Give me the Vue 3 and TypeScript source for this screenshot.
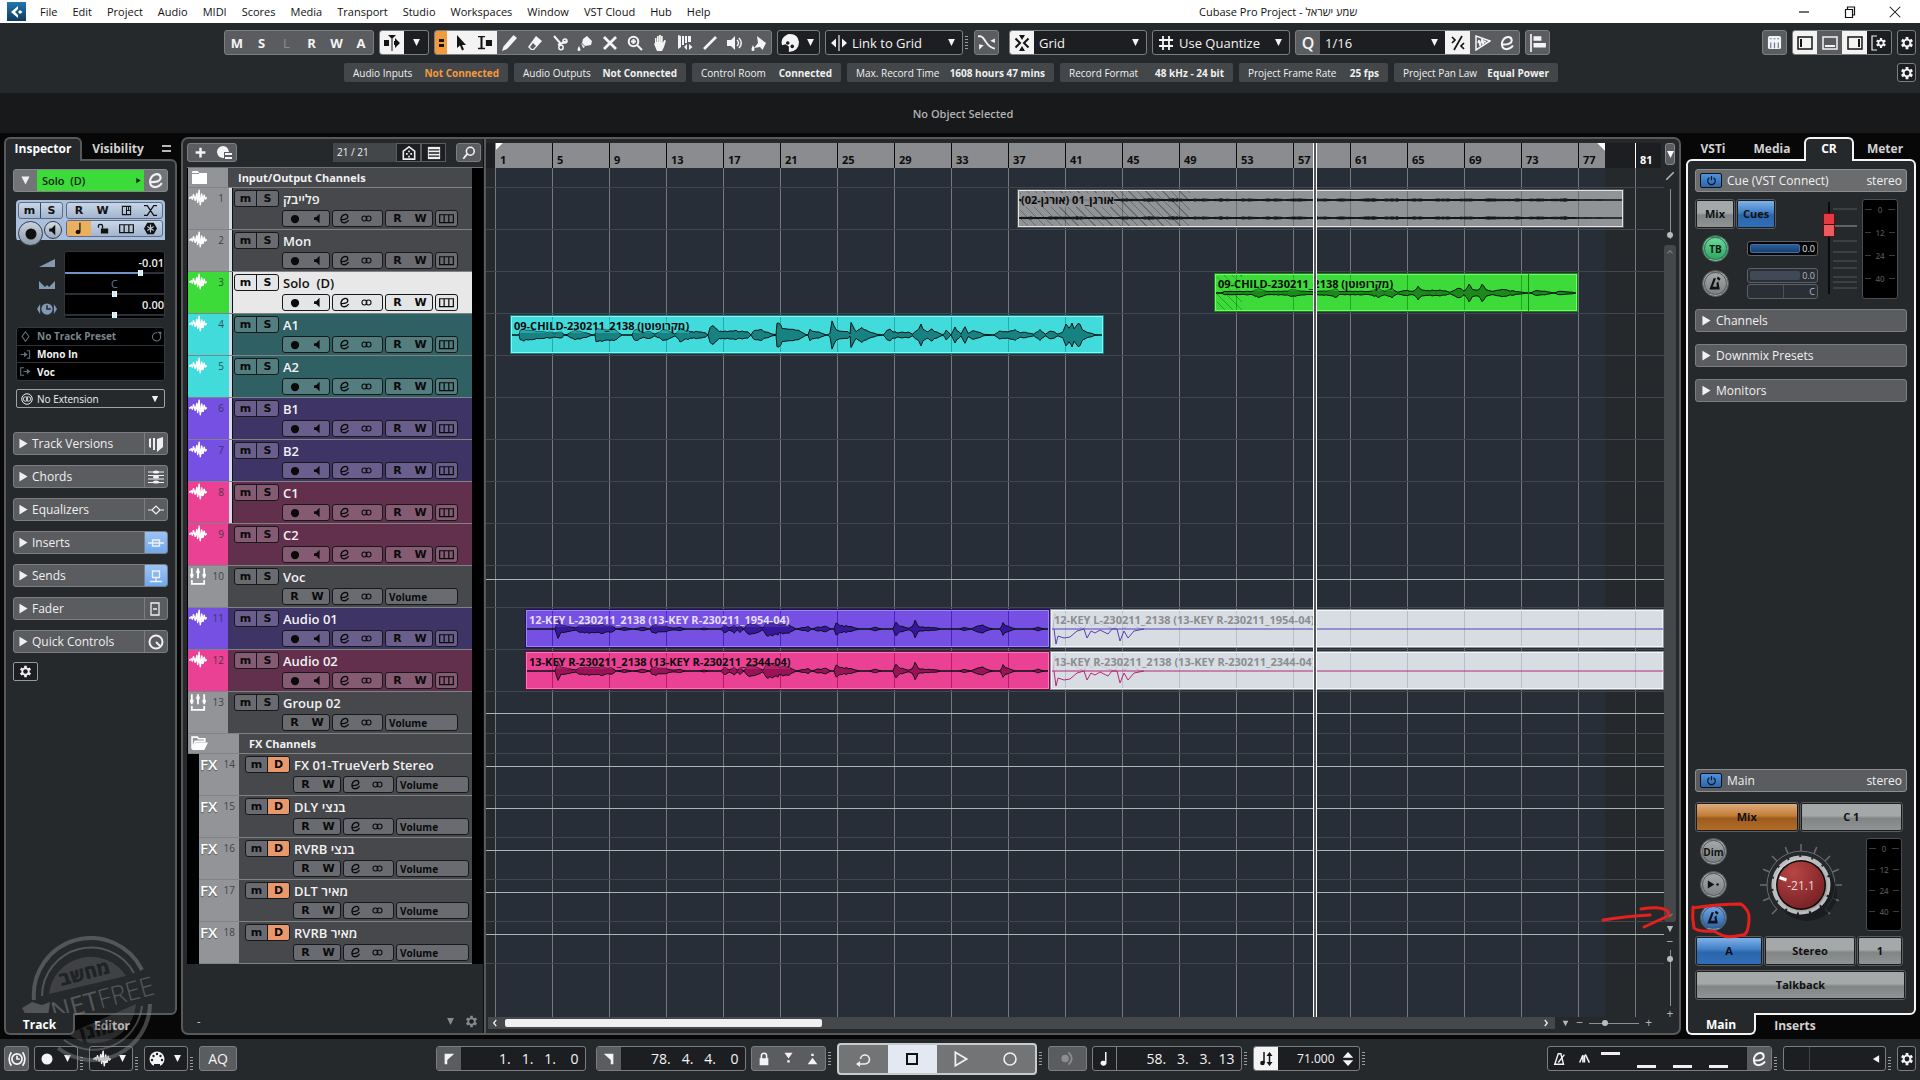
<script setup lang="ts">
import { h, ref } from 'vue'

const icons: Record<string, string> = {
  logo: '<path d="M9 2 2 8 9 14V11L6 8 9 5z"/><path d="M11 6l2.500 2-2.500 2-2-2z"/>',
  down: '<path d="M3 3h10l-5 10z"/>',
  right: '<path d="M3 2v12L13 8z"/>',
  left: '<path d="M13 2v12L3 8z"/>',
  auto: '<path d="M0 5h5v6H0zM10 3v3h1V3l5 5-5 5V10h-1v3zM7.500 0h1v16h-1zM4 0h8L8 4z"/>',
  arrow: '<path d="M5 0v13l3-2.500 2 5 2-1-2-4.500h4z"/>',
  range: '<path d="M0 0h8v1.500H5.200v12H8V15H0v-1.500h2.800v-12H0zM9 4.500h7v7H9z"/>',
  pencil: '<path d="M0 16l1.500-4.500L11.500 0 15 3 5 14z"/>',
  eraser: '<path d="M9 1l6 5-8 9H4L1 12z"/><path d="M3 12l2 2h1l3-3-3-3z" fill="#5b5c60"/>',
  cut: '<path d="M2 1l7 8M15 6L6 10" fill="none" stroke="currentColor" stroke-width="2"/><circle cx="13" cy="6" r="2" fill="none" stroke="currentColor" stroke-width="1.500"/><circle cx="9" cy="12.500" r="2.200" fill="none" stroke="currentColor" stroke-width="1.500"/>',
  glue: '<path d="M10 1l5 5-1 4-6 1-3-3 1-4zM4 8l4 4-2 1zM2 11q3 5 0 5t0-5z"/>',
  mute: '<path d="M2 2l12 12M14 2L2 14" fill="none" stroke="currentColor" stroke-width="2.800"/>',
  zoom: '<circle cx="6.500" cy="6.500" r="4.800" fill="none" stroke="currentColor" stroke-width="2"/><path d="M10 10l5 5M4 6.500h5M6.500 4v5" stroke="currentColor" stroke-width="2"/>',
  hand: '<path d="M3 8V3h1.500v4H5V1h1.700v6H7V0h1.800v7H9V1h1.700v7l1.500-3 1.800.500L12 12l-2 4H5L2 9z"/>',
  comp: '<path d="M1 0l3 1v11l-3 2zM5 1h2v9H5zM8 1h2v7H8zM11 1h3v6h-3z"/><path d="M10 9l-3 3 3 3zM12 9l3.500 3-3.500 3z"/>',
  line: '<path d="M2 14L14 2" stroke="currentColor" stroke-width="2.600"/>',
  play: '<path d="M0 5h4l4-4v14l-4-4H0z"/><path d="M10 5q3 3 0 6M12 3q4.500 5 0 10" fill="none" stroke="currentColor" stroke-width="1.500"/>',
  paint: '<path d="M6 1l9 7-2 4-1.500 3-2.500-3-6 1 4-5zM2 10q3 6 0 6t0-6z"/>',
  palette: '<path d="M8 0a8 7.500 0 0 0-7 10l3-1 3 2v5q9-1 9-9Q15 0 8 0z"/><circle cx="6" cy="8" r="1.600" fill="#1c1e21"/><circle cx="10" cy="11" r="1.600" fill="#1c1e21"/>',
  linkgrid: '<path d="M7.400 0h1.200v16H7.400zM5 3.500v9L0 8zM11 3.500v9l5-4.500z"/>',
  xfade: '<path d="M0 2h2q2 0 5 5t8 6" fill="none" stroke="currentColor" stroke-width="1.700"/><path d="M11 6l4-2v4zM5 10l-4-1v5z"/>',
  snap: '<path d="M5 0h6L8 5zM5 16h6l-3-5z"/><path d="M1.500 3.500L6 8l-4.500 4.500M14.500 3.500L10 8l4.500 4.500" fill="none" stroke="currentColor" stroke-width="2"/>',
  hash: '<path d="M5 1v14M11 1v14M1 5h14M1 11h14" stroke="currentColor" stroke-width="1.800"/>',
  quant: '<path d="M2 2l3 3-3 3M14 8l-3 3 3 3M12 1L4 15" fill="none" stroke="currentColor" stroke-width="1.700"/>',
  wavetri: '<path d="M1 1v14L15 6z" fill="none" stroke="currentColor" stroke-width="1.500"/><path d="M3 8l1-3 1 6 2-7 1 5 1-3 2 1" fill="none" stroke="currentColor" stroke-width="1.500"/>',
  e: '<path d="M2.500 9.500Q12.500 10 12.800 5.500 12.500 1.800 9 2 4.500 2.500 3 7.500 2 14 7.500 14.200 11.500 14 14 10.500" fill="none" stroke="currentColor" stroke-width="2"/>',
  align: '<path d="M1 0h1.500v16H1zM4 2h7v4H4zM4 8h11v4H4z"/>',
  pads: '<rect x="1" y="1" width="14" height="14" rx="2"/><path d="M3 4h2M7 4h2M11 4h2M4 8v6M8 8v6M12 8v6" stroke="#6a7898" stroke-width="1.300"/>',
  pleft: '<rect x="1" y="2" width="14" height="12" fill="none" stroke="currentColor" stroke-width="1.500"/><path d="M3 4h2v8H3z"/>',
  pbottom: '<rect x="1" y="2" width="14" height="12" fill="none" stroke="currentColor" stroke-width="1.500"/><path d="M3 10h10v2H3z"/>',
  pright: '<rect x="1" y="2" width="14" height="12" fill="none" stroke="currentColor" stroke-width="1.500"/><path d="M11 4h2v8h-2z"/>',
  psetup: '<path d="M6 1H1v14h5" fill="none" stroke="currentColor" stroke-width="1.200"/><path d="M10 3v10M5.700 5.500l8.600 5M5.700 10.500l8.600-5" stroke="currentColor" stroke-width="2.200"/><circle cx="10" cy="8" r="3.400"/><circle cx="10" cy="8" r="1.800" fill="#1c1e21"/>',
  gear: '<path d="M8 1v14M2 4.500l12 7M2 11.500l12-7" stroke="currentColor" stroke-width="3.200"/><circle cx="8" cy="8" r="5"/><circle cx="8" cy="8" r="2.800" fill="#1c1e21"/>',
  plus: '<path d="M8 2v12M2 8h12" stroke="currentColor" stroke-width="3"/>',
  addtrack: '<path d="M7 1a6 6 0 1 0 0 12h1V7h5Q12 1 7 1zM9 8h7v2H9zM9 12h7v2H9z"/>',
  house: '<path d="M1.500 15V6L8 1l6.500 5v9z" fill="none" stroke="currentColor" stroke-width="1.800"/><path d="M8 5v2M4.500 9h2M9.500 9h2M8 11v2" stroke="currentColor" stroke-width="1.800"/>',
  list: '<path d="M1 1h14v14H1z"/><path d="M2 4.500h12M2 8h12M2 11.500h12" stroke="#1c1e21" stroke-width="1.500"/>',
  search: '<circle cx="9.500" cy="6" r="4.500" fill="none" stroke="currentColor" stroke-width="1.800"/><path d="M6 9l-4.500 5.500" stroke="currentColor" stroke-width="2"/>',
  folder: '<path d="M1 3q0-1 1-1h5l1 2h8v11H1z"/><path d="M1 4.500h7" stroke="#929497"/>',
  folderOpen: '<path d="M1 13V2h5l1 1.500h6V6H4z" fill="none" stroke="currentColor" stroke-width="1.500"/><path d="M4.500 7H16l-3.500 7H1z"/>',
  wave: '<path d="M0 8h1l1-1 1 2 1-4 1.500 5L7 4l.700 8L9 1l1 13 1.300-9.500L12.500 11l1-5.500 1 3.500.700-1h.800" fill="none" stroke="currentColor" stroke-width="1.300" stroke-linejoin="round"/><path d="M4 6l1.500 3L8.500 4l2 7 1.500-5 1.500 3-1 2-2 1-3-2z"/>',
  group: '<path d="M2.500 1v9M8 1v9M13.500 1v9M2.500 11.500V15h11v-3.500" fill="none" stroke="currentColor" stroke-width="1.600"/><path d="M1 6h3v2.500H1zM6.500 3h3v2.500h-3zM12 6h3v2.500h-3z"/>',
  rec: '<circle cx="8" cy="8" r="5.500"/>',
  speaker: '<path d="M3 6h3l5-5v14l-5-5H3z"/>',
  stereo: '<circle cx="5" cy="8" r="3.600" fill="none" stroke="currentColor" stroke-width="1.500"/><circle cx="11" cy="8" r="3.600" fill="none" stroke="currentColor" stroke-width="1.500"/>',
  lanes: '<path d="M.700 4h14.600v8.500H.700zM5.500 4v8.500M10.500 4v8.500" fill="none" stroke="currentColor" stroke-width="1.300"/>',
  view: '<path d="M2 2h12v12H2zM8 2v12M8 8h6M11 2v6" fill="none" stroke="currentColor" stroke-width="1.500"/>',
  cross: '<path d="M0 2h4l8 12h4M16 2h-4L4 14H0" fill="none" stroke="currentColor" stroke-width="1.500"/>',
  note: '<path d="M9 1h1.500v11a3 2.500 0 1 1-1.500-2z"/>',
  unlock: '<path d="M6 8h9v6H6z"/><path d="M8 8V5q0-2-2.500-2T3 5v2" fill="none" stroke="currentColor" stroke-width="1.600"/>',
  lock: '<path d="M3 7h10v8H3z"/><path d="M5 8V4.500q0-3 3-3t3 3V8" fill="none" stroke="currentColor" stroke-width="1.800"/>',
  freeze: '<path d="M4 1h8l4 7-4 7H4L0 8z"/><path d="M8 3v10M4 5.500l8 5M4 10.500l8-5" stroke="#b3c4dc" stroke-width="1.500"/>',
  volume: '<path d="M0 12L16 4v8z"/>',
  pan: '<path d="M0 4l6 6 2-2 2 2 6-6v8H0z"/>',
  delay: '<circle cx="8" cy="8" r="4.500"/><path d="M2.500 4v8L0 8zM13.500 4v8L16 8z"/><path d="M8 5v3h3" stroke="#25292c" fill="none" stroke-width="1.200"/>',
  preset: '<path d="M8 1l5 7-5 7-5-7z" fill="none" stroke="currentColor" stroke-width="1.500"/>',
  reload: '<path d="M13 5a6 6 0 1 1-4-2.500" fill="none" stroke="currentColor" stroke-width="1.500"/><path d="M9 1h6v5z"/>',
  input: '<path d="M1 8h8M10 2.500h4v11h-4" fill="none" stroke="currentColor" stroke-width="1.500"/><path d="M6 4l5 4-5 4z"/>',
  output: '<path d="M6 2.500H1v11h5M5 8h6" fill="none" stroke="currentColor" stroke-width="1.500"/><path d="M10 4l5 4-5 4z"/>',
  ara: '<circle cx="8" cy="8" r="7" fill="none" stroke="currentColor" stroke-width="1.300"/><circle cx="6" cy="8" r="3" fill="none" stroke="currentColor" stroke-width="1.100"/><circle cx="10" cy="8" r="3" fill="none" stroke="currentColor" stroke-width="1.100"/>',
  versions: '<path d="M1 3l2-1v10l-2-1zM5 2h2v12H5zM9 3l6-2v10l-6 5z"/>',
  chords: '<path d="M0 3h16M0 6.500h16M0 10h16M0 13.500h16" stroke="currentColor" stroke-width="1.200"/><ellipse cx="8" cy="3" rx="3" ry="1.600"/><ellipse cx="8" cy="8" rx="3" ry="1.600"/><ellipse cx="8" cy="13" rx="3" ry="1.600"/>',
  eq: '<path d="M0 8h4l4-4 4 4-4 4-4-4M12 8h4" fill="none" stroke="currentColor" stroke-width="1.200"/>',
  insert: '<path d="M0 8h16M4.500 5h7v6h-7z" fill="none" stroke="currentColor" stroke-width="1.300"/>',
  send: '<path d="M4.500 3h7v6.500h-7zM8 9.500V13M2 13.500h12" fill="none" stroke="currentColor" stroke-width="1.300"/>',
  fader: '<path d="M3 2h8v12H3zM5 8h4" fill="none" stroke="currentColor" stroke-width="1.300"/>',
  knob: '<circle cx="8" cy="8" r="6.500" fill="none" stroke="currentColor" stroke-width="2"/><path d="M8 8l4 4" stroke="currentColor" stroke-width="2"/>',
  power: '<path d="M5 4a5.500 5.500 0 1 0 6 0M8 1.500v6" fill="none" stroke="currentColor" stroke-width="1.700"/>',
  metro: '<path d="M6 2.500h2.500l-3.500 9h4.500L9 7.500l2-2 1.500 9H1.500z"/><path d="M10.500.500l3 2.500-1.500 2-2.500-2z"/>',
  metroSmall: '<path d="M6 2h3l3 12H2z" fill="none" stroke="currentColor" stroke-width="1.600"/><path d="M6 12l7-9" stroke="currentColor" stroke-width="1.600"/>',
  countin: '<path d="M2 13L6 4v9M8 4v9M9 3l5 10" fill="none" stroke="currentColor" stroke-width="1.800"/>',
  ref: '<path d="M1 3v10l8-5z"/><circle cx="13" cy="8" r="1.500"/>',
  clockbr: '<circle cx="8" cy="8" r="4.500" fill="none" stroke="currentColor" stroke-width="1.600"/><path d="M8 5v3h2.500M3 2Q-1 8 3 14M13 2q4 6 0 12" fill="none" stroke="currentColor" stroke-width="1.500"/>',
  midi: '<circle cx="8" cy="8" r="7.500"/><g fill="#1c1e21"><circle cx="3" cy="9" r="1.200"/><circle cx="4.500" cy="5" r="1.200"/><circle cx="8" cy="3" r="1.200"/><circle cx="11.500" cy="5" r="1.200"/><circle cx="13" cy="9" r="1.200"/><path d="M5 13h6v3H5z"/></g>',
  flagL: '<path d="M3 2h11L6 9v5H3z"/>',
  flagR: '<path d="M2 2h11v12h-3V9z"/>',
  punchIn: '<path d="M3 1h10L8 8zM6.500 10h3v3h-3z"/>',
  punchOut: '<path d="M2 15h12L8 7zM6.500 2h3v3h-3z"/>',
  cycle: '<path d="M2 13h8a4.500 4.500 0 1 0-4.500-5" fill="none" stroke="currentColor" stroke-width="1.600"/><path d="M5 10l-4 3 4 3z"/>',
  stop: '<path d="M3 3h10v10H3z" fill="none" stroke="currentColor" stroke-width="2"/>',
  start: '<path d="M3 2v12l10-6z" fill="none" stroke="currentColor" stroke-width="1.600"/>',
  record: '<circle cx="8" cy="8" r="6" fill="none" stroke="currentColor" stroke-width="1.600"/>',
  bounce: '<circle cx="5.500" cy="8" r="4"/><path d="M9 1.500q7 6.500 0 13" fill="none" stroke="currentColor" stroke-width="2"/>',
  tempo: '<path d="M6 1v11" stroke="currentColor" stroke-width="1.500"/><circle cx="4.500" cy="12" r="2.300"/><path d="M11.500 4v9" stroke="currentColor" stroke-width="1.500"/><path d="M11.500 1l3 4h-6zM11.500 15l3-4h-6z"/>',
  spin: '<path d="M8 0l6 6.500H2zM8 16l6-6.500H2z"/>',
  min: '<path d="M3 8h10" stroke="currentColor" stroke-width="1.200"/>',
  restore: '<path d="M3.500 5.500h7v8h-7zM5.500 5V3h7v8H11" fill="none" stroke="currentColor" stroke-width="1.200"/>',
  close: '<path d="M2 2l12 12M14 2L2 14" stroke="currentColor" stroke-width="1.200"/>',
  up: '<path d="M4 10l4-4 4 4" fill="none" stroke="currentColor" stroke-width="2"/>',
  dn: '<path d="M4 6l4 4 4-4" fill="none" stroke="currentColor" stroke-width="2"/>',
  lt: '<path d="M10 3L6 8l4 5" fill="none" stroke="currentColor" stroke-width="2.200"/>',
  gt: '<path d="M6 3l4 5-4 5" fill="none" stroke="currentColor" stroke-width="2.200"/>',
}

const Ico = (p: { n: string; s?: number }) =>
  h('svg', {
    viewBox: '0 0 16 16',
    width: p.s ?? 16,
    height: p.s ?? 16,
    fill: 'currentColor',
    'aria-hidden': 'true',
    innerHTML: icons[p.n],
  })
Ico.props = ['n', 's']

const menus = ['File', 'Edit', 'Project', 'Audio', 'MIDI', 'Scores', 'Media', 'Transport', 'Studio', 'Workspaces', 'Window', 'VST Cloud', 'Hub', 'Help']
const states = ['M', 'S', 'L', 'R', 'W', 'A']
const tools = ['pencil', 'eraser', 'cut', 'glue', 'mute', 'zoom', 'hand', 'comp', 'line', 'play', 'paint']
const status = [
  { label: 'Audio Inputs', value: 'Not Connected', warn: true, w: 164 },
  { label: 'Audio Outputs', value: 'Not Connected', w: 172 },
  { label: 'Control Room', value: 'Connected', w: 149 },
  { label: 'Max. Record Time', value: '1608 hours 47 mins', w: 207 },
  { label: 'Record Format', value: '48 kHz - 24 bit', w: 173 },
  { label: 'Project Frame Rate', value: '25 fps', w: 149 },
  { label: 'Project Pan Law', value: 'Equal Power', w: 164 },
]
const sections = [
  { name: 'Track Versions', icon: 'versions' },
  { name: 'Chords', icon: 'chords' },
  { name: 'Equalizers', icon: 'eq' },
  { name: 'Inserts', icon: 'insert', on: true },
  { name: 'Sends', icon: 'send', on: true },
  { name: 'Fader', icon: 'fader' },
  { name: 'Quick Controls', icon: 'knob' },
]

type Kind = 'audio' | 'group' | 'fx' | 'folder'
interface Clip { x: number; w: number; color: string; name?: string; rtl?: boolean; fades?: number; paths: string[]; split?: number }
interface Track { kind: Kind; name: string; no?: number; tone: string; bar?: boolean; auto?: number; open?: boolean; clips?: Clip[] }

const BAR_ORIGIN = 9
const BAR_STEP = 57

/* Builds a mirrored waveform outline from [position, amplitude] envelope points. */
function wave(env: number[][], mid: number, end: number, rough = 0.35, gain = 1): string {
  const pts: [number, number][] = []
  for (let i = 0; i < env.length - 1; i++) {
    const [x0, a0] = env[i]
    const [x1, a1] = env[i + 1]
    for (let x = x0; x < x1; x += 2) {
      const base = (a0 + ((a1 - a0) * (x - x0)) / (x1 - x0)) * gain
      const n = Math.abs(Math.sin(x * 12.9898) * 43758.5) % 1
      pts.push([x, Math.max(0.1, base * (1 - rough * n))])
    }
  }
  const f = (v: number) => v.toFixed(1)
  const top = pts.map(([x, a]) => `${f(x)} ${f(mid - a)}`)
  const low = [...pts].reverse().map(([x, a]) => `${f(x)} ${f(mid + a)}`)
  return `M2 ${mid}L${top.join('L')}L${end - 2} ${mid}L${low.join('L')}Z`
}
const scale = (env: number[][], k: number) => env.map(([x, a]) => [Math.round(x / k), a])

const childEnv = scale([[22, 0], [25, 7], [52, 6], [67, 5], [100, 3], [127, 3], [133, 0], [143, 1], [155, 5], [172, 5], [197, 1], [209, 0], [211, 8], [257, 7], [275, 0], [299, 0], [305, 7], [327, 3], [337, 5], [355, 1], [367, 4], [379, 7], [405, 1], [417, 7], [432, 5], [477, 3], [486, 0], [491, 9], [494, 11], [502, 8], [512, 4], [545, 5], [582, 4], [590, 0], [599, 5], [617, 6], [642, 1], [653, 0], [655, 16], [660, 15], [667, 8], [687, 7], [707, 5], [722, 1], [731, 0], [735, 6], [757, 3], [777, 0], [784, 2], [790, 15], [798, 6], [827, 4], [832, 1], [835, 14], [839, 12], [847, 4], [862, 8], [877, 4], [899, 1], [915, 0], [927, 7], [947, 3], [977, 3], [987, 1], [995, 6], [1003, 8], [1007, 15], [1013, 6], [1025, 4], [1034, 7], [1047, 3], [1060, 0], [1069, 6], [1080, 0], [1091, 8], [1105, 1], [1115, 10], [1122, 2], [1137, 6], [1160, 1], [1185, 0], [1197, 4], [1220, 4], [1237, 6], [1250, 3], [1265, 3], [1285, 1], [1299, 7], [1310, 1], [1327, 5], [1342, 1], [1354, 4], [1362, 14], [1370, 7], [1376, 15], [1382, 9], [1387, 13], [1397, 11], [1404, 6], [1412, 4], [1424, 2], [1435, 0]], 2.45)
const soloEnv = scale([[16, 0], [25, 2], [45, 2], [60, 2], [90, 2], [102, 5], [120, 2], [150, 2], [170, 3], [186, 4], [205, 2], [230, 2], [270, 3], [278, 6], [288, 2], [310, 2], [335, 2], [360, 2], [380, 5], [395, 2], [410, 5], [425, 1], [440, 3], [460, 2], [470, 7], [485, 3], [530, 3], [545, 1], [565, 6], [577, 2], [582, 4], [587, 13], [594, 4], [608, 3], [618, 11], [627, 4], [640, 2], [665, 4], [710, 1], [722, 0], [728, 0], [745, 3], [765, 2], [785, 0], [795, 2], [825, 1], [835, 0]], 2.306)
const keyEnv = scale([[68, 0], [74, 11], [80, 5], [105, 2], [115, 1], [120, 4], [165, 5], [195, 4], [203, 0], [225, 2], [240, 0], [265, 2], [280, 0], [285, 5], [310, 4], [330, 1], [345, 2], [360, 0], [390, 0], [400, 1], [415, 0], [440, 0], [447, 5], [458, 1], [468, 5], [475, 1], [482, 4], [490, 0], [500, 7], [525, 4], [533, 1], [540, 8], [570, 6], [595, 4], [608, 0], [633, 3], [643, 0], [655, 2], [675, 3], [685, 0], [693, 0], [697, 7], [710, 4], [730, 3], [750, 0], [770, 0], [785, 2], [800, 0], [825, 0], [830, 8], [840, 4], [860, 1], [868, 3], [873, 11], [881, 3], [895, 2], [915, 2], [935, 0], [970, 0], [985, 2], [1000, 0], [1010, 3], [1025, 5], [1035, 2], [1050, 0], [1063, 0], [1070, 7], [1080, 3], [1100, 0], [1135, 0], [1150, 2], [1165, 0]], 2.24)
const organ: number[][] = []
for (let x = 4; x < 590; x += 8) organ.push([x, x > 560 ? 0.2 : 0.3 + 1.1 * Math.abs(Math.sin(x * 1.7))])

const tail = 'M4 18L6 33L8 25L14 27L20 26L27 20L34 18L37 27L41 20L45 22L50 19L58 23L62 18L67 18L70 30L74 20L78 27L84 20L94 18'
const tailTop = 'M3 18L5 3L9 12L16 9L24 13L34 18L38 8L41 15L47 12L56 15L64 18L70 10L75 18L80 9L88 17L94 18'

const tracks: Track[] = [
  { kind: 'folder', name: 'Input/Output Channels', tone: 'gray' },
  { kind: 'audio', no: 1, name: 'פלייבק', tone: 'gray', bar: true, clips: [{ x: 531, w: 607, color: 'c-gray', name: 'אורגן_01 (אורגן-02)', rtl: true, fades: 170, paths: [wave(organ, 11, 607, 0.6), wave(organ, 29, 607, 0.6)] }] },
  { kind: 'audio', no: 2, name: 'Mon', tone: 'gray', bar: true },
  { kind: 'audio', no: 3, name: 'Solo  (D)', tone: 'sel', bar: true, clips: [{ x: 728, w: 364, color: 'c-green', name: '09-CHILD-230211_2138 (מקרופוטן)', fades: 25, split: 313, paths: [wave(soloEnv, 20, 364)] }] },
  { kind: 'audio', no: 4, name: 'A1', tone: 'teal', bar: true, clips: [{ x: 24, w: 594, color: 'c-cyan', name: '09-CHILD-230211_2138 (מקרופוטן)', paths: [wave(childEnv, 20, 594)] }] },
  { kind: 'audio', no: 5, name: 'A2', tone: 'teal', bar: true },
  { kind: 'audio', no: 6, name: 'B1', tone: 'violet', bar: true },
  { kind: 'audio', no: 7, name: 'B2', tone: 'violet', bar: true },
  { kind: 'audio', no: 8, name: 'C1', tone: 'pink', bar: true },
  { kind: 'audio', no: 9, name: 'C2', tone: 'pink' },
  { kind: 'group', no: 10, name: 'Voc', tone: 'gray', auto: 13 },
  { kind: 'audio', no: 11, name: 'Audio 01', tone: 'violet', clips: [
    { x: 39, w: 525, color: 'c-violet', name: '12-KEY L-230211_2138 (13-KEY R-230211_1954-04)', paths: [wave(keyEnv, 20, 525, 0.4)] },
    { x: 564, w: 614, color: 'c-mute v', name: '12-KEY L-230211_2138 (13-KEY R-230211_1954-04)', paths: [] }] },
  { kind: 'audio', no: 12, name: 'Audio 02', tone: 'pink', clips: [
    { x: 39, w: 525, color: 'c-pink', name: '13-KEY R-230211_2138 (13-KEY R-230211_2344-04)', paths: [wave(keyEnv, 20, 525, 0.4)] },
    { x: 564, w: 614, color: 'c-mute p', name: '13-KEY R-230211_2138 (13-KEY R-230211_2344-04)', paths: [] }] },
  { kind: 'group', no: 13, name: 'Group 02', tone: 'gray', auto: 21 },
  { kind: 'folder', name: 'FX Channels', tone: 'gray', open: true },
  { kind: 'fx', no: 14, name: 'FX 01-TrueVerb Stereo', tone: 'gray', auto: 12 },
  { kind: 'fx', no: 15, name: 'DLY בנצי', tone: 'gray', auto: 12 },
  { kind: 'fx', no: 16, name: 'RVRB בנצי', tone: 'gray', auto: 12 },
  { kind: 'fx', no: 17, name: 'DLT מאיר', tone: 'gray', auto: 12 },
  { kind: 'fx', no: 18, name: 'RVRB מאיר', tone: 'gray', auto: 12 },
]
const bars = Array.from({ length: 21 }, (_, i) => i * 4 + 1)

const clipStyle = (c: Clip) => ({
  left: `${c.x}px`,
  width: `${c.w}px`,
  '--grid-x': `${((BAR_ORIGIN - c.x) % BAR_STEP) - 1}px`,
})

const knobTicks = Array.from({ length: 13 }, (_, i) => {
  const a = ((135 + (i * 270) / 12) * Math.PI) / 180
  return { x1: 42 + 34 * Math.cos(a), y1: 42 + 34 * Math.sin(a), x2: 42 + 41 * Math.cos(a), y2: 42 + 41 * Math.sin(a) }
})
const faderTicks = [6, 23, 38, 49, 58, 65, 74, 79, 85]

const volume = ref(78)
const panPos = ref(50)
const delayPos = ref(50)
const cueFader = ref(86)
const hZoom = ref(30)
const vZoom = ref(88)
const wZoom = ref(2)
</script>

<template>
  <div class="app">
    <header class="menubar">
      <span class="logo"><Ico n="logo" :s="16" /></span>
      <nav class="menus">
        <button v-for="m in menus" :key="m" type="button">{{ m }}</button>
      </nav>
      <h1 class="title">Cubase Pro Project - שמע ישראל</h1>
      <div class="winctl">
        <button type="button" aria-label="Minimize"><Ico n="min" /></button>
        <button type="button" aria-label="Restore"><Ico n="restore" /></button>
        <button type="button" aria-label="Close"><Ico n="close" :s="14" /></button>
      </div>
    </header>

    <section class="toolbar">
      <div class="tools">
        <div class="grp">
          <button v-for="s in states" :key="s" type="button" class="cell letter" :class="{ dim: s === 'L' }">{{ s }}</button>
        </div>
        <div class="grp dark">
          <button type="button" class="cell lit" aria-label="Auto-scroll"><Ico n="auto" /></button>
          <button type="button" class="cell" aria-label="Auto-scroll options"><Ico n="down" :s="11" /></button>
        </div>
        <div class="grp">
          <button type="button" class="cell orange" aria-label="Tool buttons"><i></i><i></i></button>
          <button type="button" class="cell lit" aria-label="Object selection"><Ico n="arrow" /></button>
          <button type="button" class="cell lit" aria-label="Range selection"><Ico n="range" :s="14" /></button>
          <button v-for="t in tools" :key="t" type="button" class="cell" :aria-label="t"><Ico :n="t" /></button>
        </div>
        <div class="grp dark color">
          <button type="button" class="cell" aria-label="Color"><Ico n="palette" :s="18" /></button>
          <button type="button" class="cell small" aria-label="Color menu"><Ico n="down" :s="11" /></button>
        </div>
        <div class="grp dark w138">
          <label class="pick"><Ico n="linkgrid" /><select aria-label="Nudge"><option>Link to Grid</option></select><Ico n="down" :s="11" /></label>
        </div>
        <span class="dots near"></span>
        <div class="grp"><button type="button" class="cell" aria-label="Zero crossings"><Ico n="xfade" :s="18" /></button></div>
        <div class="grp dark w138 snap">
          <button type="button" class="cell lit" aria-label="Snap"><Ico n="snap" /></button>
          <label class="pick"><select aria-label="Snap type"><option>Grid</option></select><Ico n="down" :s="11" /></label>
        </div>
        <div class="grp dark w138">
          <label class="pick"><Ico n="hash" /><select aria-label="Grid type"><option>Use Quantize</option></select><Ico n="down" :s="11" /></label>
        </div>
        <div class="grp quant">
          <button type="button" class="cell letter q">Q</button>
          <label class="pick dark"><select aria-label="Quantize preset"><option>1/16</option></select><Ico n="down" :s="11" /></label>
          <button type="button" class="cell lit" aria-label="Iterative quantize"><Ico n="quant" /></button>
          <button type="button" class="cell" aria-label="Audio warp quantize"><Ico n="wavetri" /></button>
          <button type="button" class="cell" aria-label="Quantize panel"><Ico n="e" /></button>
        </div>
        <div class="grp"><button type="button" class="cell" aria-label="Align"><Ico n="align" :s="18" /></button></div>
        <span class="grow"></span>
        <div class="grp"><button type="button" class="cell" aria-label="MixConsole"><Ico n="pads" :s="15" /></button></div>
        <div class="grp">
          <button type="button" class="cell lit" aria-label="Left zone"><Ico n="pleft" /></button>
          <button type="button" class="cell" aria-label="Lower zone"><Ico n="pbottom" /></button>
          <button type="button" class="cell lit" aria-label="Right zone"><Ico n="pright" /></button>
          <button type="button" class="cell black" aria-label="Window layout"><Ico n="psetup" /></button>
        </div>
        <div class="grp dark"><button type="button" class="cell tiny" aria-label="Toolbar setup"><Ico n="gear" :s="14" /></button></div>
      </div>
      <div class="status">
        <div v-for="s in status" :key="s.label" class="stat" :style="{ width: s.w + 'px' }">
          <span>{{ s.label }}</span><b :class="{ warn: s.warn }">{{ s.value }}</b>
        </div>
        <span class="grow"></span>
        <div class="grp dark low"><button type="button" class="cell tiny" aria-label="Status line setup"><Ico n="gear" :s="14" /></button></div>
      </div>
    </section>

    <div class="infoline"><b>No Object Selected</b></div>

    <main class="work">
      <aside class="zone left">
        <div class="tabs top">
          <button type="button" class="tab on insp">Inspector</button>
          <button type="button" class="tab vis">Visibility</button>
          <span class="eqmark"></span>
        </div>
        <div class="body">
          <div class="trackhead">
            <button type="button" aria-label="Collapse"><Ico n="down" :s="13" /></button>
            <span class="tname">Solo&nbsp; (D)<Ico n="right" :s="7" /></span>
            <button type="button" aria-label="Edit channel"><Ico n="e" :s="17" /></button>
          </div>
          <div class="pad">
            <div class="padl">
              <div class="pgrp"><button type="button">m</button><button type="button">S</button></div>
              <div class="rounds">
                <button type="button" class="big" aria-label="Record enable"><Ico n="rec" /></button>
                <button type="button" class="sm" aria-label="Monitor"><Ico n="speaker" :s="12" /></button>
              </div>
            </div>
            <div class="padr">
              <div class="pgrp"><button type="button">R</button><button type="button">W</button><button type="button" aria-label="Channel view"><Ico n="view" :s="11" /></button><button type="button" aria-label="Crossfade"><Ico n="cross" :s="13" /></button></div>
              <div class="pgrp"><button type="button" class="hot" aria-label="Musical time"><Ico n="note" :s="13" /></button><button type="button" aria-label="Lock"><Ico n="unlock" :s="13" /></button><button type="button" aria-label="Lanes"><Ico n="lanes" :s="15" /></button><button type="button" aria-label="Freeze"><Ico n="freeze" :s="13" /></button></div>
            </div>
          </div>
          <div class="vals">
            <div class="vicons"><Ico n="volume" /><Ico n="pan" /><Ico n="delay" :s="20" /></div>
            <div class="vbox">
              <label><span>-0.01</span><input v-model="volume" type="range" class="mini filled" aria-label="Volume" /></label>
              <label class="mid"><span>C</span><input v-model="panPos" type="range" class="mini" aria-label="Pan" /></label>
              <label><span>0.00</span><input v-model="delayPos" type="range" class="mini" aria-label="Delay" /></label>
            </div>
          </div>
          <div class="routes">
            <div class="route off"><Ico n="preset" :s="11" /><b>No Track Preset</b><Ico n="reload" :s="11" /></div>
            <div class="route"><Ico n="input" :s="11" /><b>Mono In</b></div>
            <div class="route"><Ico n="output" :s="11" /><b>Voc</b></div>
          </div>
          <label class="ext"><Ico n="ara" :s="12" /><select aria-label="Extension"><option>No Extension</option></select><Ico n="down" :s="10" /></label>
          <div class="sections">
            <div v-for="s in sections" :key="s.name" class="sect">
              <button type="button" class="slabel"><Ico n="right" :s="13" />{{ s.name }}</button>
              <button type="button" class="sico" :class="{ on: s.on }" :aria-label="s.name + ' state'"><Ico :n="s.icon" /></button>
            </div>
          </div>
          <button type="button" class="setup" aria-label="Inspector setup"><Ico n="gear" :s="13" /></button>
        </div>
        <div class="tabs bottom">
          <button type="button" class="tab on trk">Track</button>
          <button type="button" class="tab edt">Editor</button>
        </div>
      </aside>

      <section class="zone mid">
        <div class="list">
          <div class="listbar">
            <div class="grp low"><button type="button" class="cell" aria-label="Add track"><Ico n="plus" :s="13" /></button><button type="button" class="cell" aria-label="Track preset"><Ico n="addtrack" /></button></div>
            <span class="grow"></span>
            <div class="count"><span>21 / 21</span><button type="button" aria-label="Filter agents"><Ico n="house" :s="14" /></button><button type="button" aria-label="Filter types"><Ico n="list" :s="14" /></button></div>
            <div class="grp low find"><button type="button" class="cell" aria-label="Find tracks"><Ico n="search" :s="14" /></button></div>
          </div>
          <div class="rows">
            <div v-for="t in tracks" :key="t.name" class="row" :class="[t.kind, t.tone, { bar: t.bar, open: t.open }]">
              <div class="tag">
                <b v-if="t.kind === 'fx'" class="fxm">FX</b>
                <Ico v-else-if="t.kind === 'folder'" :n="t.open ? 'folderOpen' : 'folder'" :s="t.open ? 17 : 16" />
                <Ico v-else :n="t.kind === 'group' ? 'group' : 'wave'" :s="18" />
                <span v-if="t.no">{{ t.no }}</span>
              </div>
              <div v-if="t.kind === 'folder'" class="fold">{{ t.name }}</div>
              <div v-else class="ctl">
                <div class="line1">
                  <div class="ms"><button type="button">m</button><button type="button" :class="{ def: t.kind === 'fx' }">{{ t.kind === 'fx' ? 'D' : 'S' }}</button></div>
                  <b class="name">{{ t.name }}</b>
                </div>
                <div class="line2">
                  <div v-if="t.kind === 'audio'" class="g g48"><button type="button" aria-label="Record enable"><Ico n="rec" :s="12" /></button><button type="button" aria-label="Monitor"><Ico n="speaker" :s="11" /></button></div>
                  <div v-else class="g g48"><button type="button">R</button><button type="button">W</button></div>
                  <div class="g g50"><button type="button" aria-label="Edit channel"><Ico n="e" :s="11" /></button><button type="button" aria-label="Stereo"><Ico n="stereo" :s="11" /></button></div>
                  <template v-if="t.kind === 'audio'">
                    <div class="g g48"><button type="button">R</button><button type="button">W</button></div>
                    <div class="g g23"><button type="button" aria-label="Lanes"><Ico n="lanes" :s="15" /></button></div>
                  </template>
                  <button v-else type="button" class="g g73">Volume</button>
                </div>
              </div>
            </div>
          </div>
          <div class="listfoot"><span>-</span><i class="grow"></i><Ico n="down" :s="11" /><Ico n="gear" :s="13" /></div>
        </div>
        <div class="split"></div>
        <div class="arrange">
          <div class="ruler">
            <div class="rulerin">
              <span v-for="b in bars" :key="b" :class="{ out: b > 78 }">{{ b }}</span>
            </div>
          </div>
          <div class="lanes">
            <div class="loop"></div>
            <div class="gridv"></div>
            <div v-for="t in tracks" :key="t.name" class="lane" :class="{ short: t.kind === 'folder' }">
              <i v-if="t.auto" class="auto" :style="{ top: t.auto + 'px' }"></i>
              <div v-for="c in t.clips" :key="c.x" class="clip" :class="c.color" :style="clipStyle(c)">
                <i v-if="c.fades" class="fade" :style="{ width: c.fades + 'px' }"></i>
                <svg :width="c.w" height="38" aria-hidden="true">
                  <path v-for="(p, i) in c.paths" :key="i" :d="p" class="wv" />
                  <g v-if="!c.paths.length" class="ghost"><path d="M2 20H614" /><g transform="translate(0 2)"><path :d="tail" /><path :d="tailTop" class="soft" /></g></g>
                </svg>
                <i v-if="c.split" class="cutline" :style="{ left: c.split + 'px' }"></i>
                <b :dir="c.rtl ? 'rtl' : 'ltr'">{{ c.name }}</b>
              </div>
            </div>
          </div>
          <div class="hscroll">
            <div class="htrack"><Ico n="lt" :s="10" /><i class="hthumb"></i><span class="grow"></span><Ico n="gt" :s="10" /></div>
            <Ico n="down" :s="9" /><span class="sg">−</span>
            <input v-model="hZoom" type="range" class="zr" aria-label="Horizontal zoom" /><span class="sg">+</span>
          </div>
          <div class="cursor"></div>
        </div>
        <div class="vcol">
          <button type="button" class="vbtn" aria-label="Zoom presets"><Ico n="down" :s="11" /></button>
          <Ico n="line" :s="10" />
          <input v-model="wZoom" type="range" class="zv h50" aria-label="Waveform zoom" />
          <div class="vtrack"><Ico n="up" :s="10" /><span class="grow"></span><Ico n="dn" :s="10" /></div>
          <Ico n="down" :s="10" /><span class="sg">−</span>
          <input v-model="vZoom" type="range" class="zv h60" aria-label="Vertical zoom" />
          <span class="sg">+</span>
        </div>
      </section>

      <aside class="zone right">
        <div class="tabs top">
          <button type="button" class="tab rt1">VSTi</button>
          <button type="button" class="tab rt2">Media</button>
          <button type="button" class="tab on rt3">CR</button>
          <button type="button" class="tab rt4">Meter</button>
        </div>
        <div class="body">
          <div class="chan"><button type="button" class="pow" aria-label="Power"><Ico n="power" :s="11" /></button><span>Cue (VST Connect)</span><i class="grow"></i><span>stereo</span></div>
          <div class="cue">
            <div class="cuel">
              <div class="pair"><button type="button" class="hb gray w40">Mix</button><button type="button" class="hb blue w40">Cues</button></div>
              <div class="crow"><button type="button" class="rnd green">TB</button><div class="lvl on"><i></i><span>0.0</span></div></div>
              <div class="crow two"><button type="button" class="rnd" aria-label="Click"><Ico n="metro" :s="15" /></button>
                <div class="stack"><div class="lvl"><i></i><span>0.0</span></div><div class="lvl panl"><span>C</span></div></div></div>
            </div>
            <div class="fad">
              <svg width="34" height="100" aria-hidden="true"><path d="M6 3v92" stroke="#0a0a0b" stroke-width="2" /><path v-for="(y, i) in faderTicks" :key="y" :d="`M10 ${y}h24`" :class="['ft', { strong: i === 1 }]" transform="translate(0 4)" /></svg>
              <input v-model="cueFader" type="range" class="vf" aria-label="Cue level" />
            </div>
            <div class="meter"><span>0</span><span>12</span><span>24</span><span>40</span></div>
          </div>
          <button v-for="n in ['Channels', 'Downmix Presets', 'Monitors']" :key="n" type="button" class="rsect"><Ico n="right" :s="13" />{{ n }}</button>
          <span class="grow"></span>
          <div class="chan main"><button type="button" class="pow" aria-label="Power"><Ico n="power" :s="11" /></button><span>Main</span><i class="grow"></i><span>stereo</span></div>
          <div class="pair p1"><button type="button" class="hb amber">Mix</button><button type="button" class="hb gray">C 1</button></div>
          <div class="mainrow">
            <div class="mcol">
              <button type="button" class="rnd">Dim</button>
              <button type="button" class="rnd" aria-label="Reference level"><Ico n="ref" :s="13" /></button>
              <button type="button" class="rnd bluer" aria-label="Metronome click"><Ico n="metro" :s="15" /></button>
            </div>
            <div class="knob">
              <svg width="84" height="84" viewBox="0 0 84 84" aria-hidden="true">
                <defs>
                  <radialGradient id="kr" cx=".35" cy=".25" r=".9"><stop offset="0" stop-color="#b94545" /><stop offset="1" stop-color="#6e1c20" /></radialGradient>
                  <linearGradient id="kg" x1="0" y1="0" x2="1" y2="1"><stop offset="0" stop-color="#dcdcdc" /><stop offset="1" stop-color="#8d8d8d" /></linearGradient>
                </defs>
                <line v-for="(t, i) in knobTicks" :key="i" v-bind="t" stroke="#6a6c6e" stroke-width="1.500" />
                <path d="M17.900 66.100A34 34 0 1 1 66.100 66.100" fill="none" stroke="#6a6c6e" />
                <ellipse cx="48" cy="50" rx="30" ry="28" fill="#15171a" opacity=".7" />
                <circle cx="42" cy="42" r="28" fill="url(#kg)" stroke="#bcbcbc" stroke-width="3" stroke-dasharray="10 2" />
                <circle cx="42" cy="42" r="25" fill="#0c0c0c" /><circle cx="42" cy="42" r="23.500" fill="url(#kr)" />
                <path d="M20.500 34.500l7 2.500" stroke="#fff" stroke-width="3" />
              </svg>
              <b>-21.1</b>
            </div>
            <div class="meter m2"><span>0</span><span>12</span><span>24</span><span>40</span></div>
          </div>
          <div class="pair p2"><button type="button" class="hb blue ba">A</button><button type="button" class="hb gray bs">Stereo</button><button type="button" class="hb gray b1">1</button></div>
          <button type="button" class="hb gray talk">Talkback</button>
        </div>
        <div class="tabs bottom">
          <button type="button" class="tab on rb1">Main</button>
          <button type="button" class="tab rb2">Inserts</button>
        </div>
      </aside>
    </main>

    <footer class="transport">
      <div class="grp"><button type="button" class="cell" aria-label="Constrain delay"><Ico n="clockbr" :s="18" /></button></div>
      <div class="grp dark opt"><button type="button" class="cell" aria-label="Record mode"><Ico n="rec" /></button><button type="button" class="cell small" aria-label="Record mode menu"><Ico n="down" :s="11" /></button></div>
      <span class="dots"></span>
      <div class="grp dark opt"><button type="button" class="cell" aria-label="Audio record mode"><Ico n="wave" :s="18" /></button><button type="button" class="cell small" aria-label="Audio record mode menu"><Ico n="down" :s="11" /></button></div>
      <span class="dots"></span>
      <div class="grp dark opt"><button type="button" class="cell" aria-label="MIDI record mode"><Ico n="midi" /></button><button type="button" class="cell small" aria-label="MIDI record mode menu"><Ico n="down" :s="11" /></button></div>
      <span class="dots"></span>
      <div class="grp aq"><button type="button" class="cell">AQ</button></div>
      <span class="lead"></span>
      <div class="center">
        <div class="grp dark pos"><button type="button" class="cell mid" aria-label="Left locator"><Ico n="flagL" :s="14" /></button><input type="text" value="1.   1.   1.    0" aria-label="Left locator position" /></div>
        <div class="grp dark pos gap"><button type="button" class="cell mid" aria-label="Right locator"><Ico n="flagR" :s="14" /></button><input type="text" value="78.   4.   4.    0" aria-label="Right locator position" /></div>
        <div class="grp"><button type="button" class="cell" aria-label="Lock locators"><Ico n="lock" :s="14" /></button><button type="button" class="cell" aria-label="Punch in"><Ico n="punchIn" :s="13" /></button><button type="button" class="cell" aria-label="Punch out"><Ico n="punchOut" :s="13" /></button></div>
        <span class="dots"></span>
        <div class="keys"><button type="button" aria-label="Cycle"><Ico n="cycle" /></button><button type="button" class="on" aria-label="Stop"><Ico n="stop" /></button><button type="button" aria-label="Play"><Ico n="start" :s="18" /></button><button type="button" aria-label="Record"><Ico n="record" /></button></div>
        <span class="dots"></span>
        <div class="grp faint"><button type="button" class="cell" aria-label="Jog"><Ico n="bounce" :s="15" /></button></div>
        <div class="grp dark pos"><button type="button" class="cell line" aria-label="Time format"><Ico n="note" /></button><input type="text" value="58.   3.   3.  13" aria-label="Cursor position" /></div>
        <span class="dots"></span>
        <div class="grp dark tempo"><button type="button" class="cell lit" aria-label="Tempo track"><Ico n="tempo" /></button><input type="text" value="71.000" aria-label="Tempo" /><Ico n="spin" :s="14" /></div>
        <span class="dots"></span>
      </div>
      <span class="trail"></span>
      <div class="grp dark clicks">
        <button type="button" class="cell" aria-label="Metronome"><Ico n="metroSmall" :s="14" /></button>
        <button type="button" class="cell" aria-label="Count-in"><Ico n="countin" :s="13" /></button>
        <div class="beats"><i class="hi"></i><i></i><i></i><i></i></div>
        <button type="button" class="cell mid" aria-label="Metronome setup"><Ico n="e" /></button>
      </div>
      <span class="dots"></span>
      <div class="grp dark level"><i></i><span class="grow"></span><Ico n="left" :s="10" /></div>
      <span class="dots"></span>
      <div class="grp dark"><button type="button" class="cell tiny" aria-label="Transport setup"><Ico n="gear" :s="14" /></button></div>
    </footer>

    <svg class="ink" width="160" height="50" viewBox="0 0 160 50" aria-hidden="true">
      <g fill="none" stroke="#e8201d" stroke-width="3" stroke-linecap="round" stroke-linejoin="round">
        <path d="M3 24Q28 20 50 19M41 13Q60 10 66 14 70 16 68 20L44 31" />
        <path d="M93 12Q118 8 141 8 150 14 149 24 148 40 142 39 130 42 124 40L113 35Q98 36 94 32 92 22 93 11" />
      </g>
    </svg>
    <svg class="stamp" width="150" height="130" viewBox="0 0 150 130" aria-hidden="true">
      <g fill="none" stroke="#8b8b8b">
        <path d="M14 64A57 57 0 0 1 122 34" stroke-width="4" /><path d="M130 68A57 57 0 0 1 38 112" stroke-width="4" />
        <path d="M22 60A49 49 0 0 1 114 37" stroke-width="2" /><path d="M122 70A49 49 0 0 1 44 104" stroke-width="2" />
      </g>
      <path d="M29 58A42 42 0 0 1 106 40zM116 68A42 42 0 0 1 48 98z" fill="#777" opacity=".7" />
      <path d="M2 72l10-6 10 3 8-3-2 14-10 8-10-5z" fill="#8b8b8b" />
      <g transform="rotate(-15 75 65)">
        <text x="30" y="74" class="nf"><tspan class="thick">NET</tspan>FREE</text>
        <text x="46" y="42" class="he">מחשב</text>
        <text x="52" y="100" class="he">מוגן</text>
      </g>
    </svg>
  </div>
</template>

<style>
body { margin: 0; background: #070707; overflow: hidden; }
</style>

<style scoped>
.app { position: relative; display: flex; flex-direction: column; height: 100vh; font-family: "Open Sans", "Noto Sans", "DejaVu Sans", sans-serif; font-size: 11px; line-height: 16px; color: #f0f0f0; background: #070707; }
.app * { box-sizing: border-box; }
button, input, select { font: inherit; color: inherit; background: none; border: 0; padding: 0; margin: 0; min-width: 0; outline: none; }
button { display: flex; align-items: center; justify-content: center; white-space: nowrap; }
svg { flex: none; display: block; }
.grow { flex: 1; }

.menubar { display: flex; align-items: center; height: 23px; background: #fff; color: #111; position: relative; }
.logo { margin-left: 7px; width: 19px; height: 19px; background: linear-gradient(#2178b0, #123a5c); color: #fff; display: flex; align-items: center; justify-content: center; }
.menus { display: flex; gap: 15px; margin-left: 14px; }
.title { margin: 0; position: absolute; left: 1199px; font-size: 11px; font-weight: 400; }
.winctl { margin-left: auto; display: flex; gap: 30px; padding-right: 18px; }

.toolbar { height: 70px; background: #25292c; padding: 7px 4px 0 224px; display: flex; flex-direction: column; gap: 8px; }
.tools { display: flex; gap: 5px; }
.grp { display: flex; height: 25px; flex: none; border: 1px solid #7b7d80; border-radius: 3px; background: #5b5c60; overflow: hidden; color: #f4f4f4; }
.grp.dark, .dark { background: #1c1e21; }
.grp .cell { width: 25px; height: 100%; margin: 0; }
.grp > .cell:first-child, .grp > .cell:last-child { width: 24px; }
.grp > .cell:only-child { width: 23px; }
.grp .cell.lit { background: #f3f3f3; color: #141414; }
.grp .cell.black { background: #1c1e21; }
.grp .cell.orange { width: 12px; background: #f39a3c; flex-direction: column; gap: 2px; }
.orange i { width: 5px; height: 3px; background: #141414; }
.grp .cell.small { width: 17px; }
.grp .cell.tiny { width: 17px; }
.grp .cell.mid { background: #5b5c60; }
.letter { font-weight: 700; font-size: 13px; }
.letter.q { font-size: 16px; font-weight: 600; }
.letter.dim { color: #8b8c90; font-weight: 400; }
.grp.low { height: 19px; }
.w138 { width: 138px; }
.dots { width: 3px; height: 13px; align-self: center; flex: none; background: repeating-linear-gradient(#9a9c9e 0 1px, transparent 1px 3px); margin: 0 6px 0 2px; }
.dots.near { margin: 0 1px 0 -3px; }
.snap { margin-left: 5px; }
.pick { flex: 1; display: flex; align-items: center; gap: 5px; padding: 0 5px; }
.pick select, .ext select { appearance: none; flex: 1; height: 100%; }
.pick select { font-size: 13px; }
.quant { width: 225px; }
.status { display: flex; gap: 6px; padding-left: 120px; }
.stat { height: 19px; background: #44474a; border-radius: 2px; display: flex; align-items: center; justify-content: space-between; padding: 0 9px; font-size: 10px; white-space: nowrap; }
.stat b { font-size: 10px; }
.warn { color: #f39a3c; }
.infoline { height: 40px; background: #18191b; display: flex; align-items: center; justify-content: center; color: #b2b2b2; padding: 2px 0 0 6px; font-size: 11px; }
.infoline b { font-weight: 600; }

.work { flex: 1; min-height: 0; display: flex; padding: 4px; }
.zone { display: flex; flex-direction: column; flex: none; --edge: #58595b; }
.left { width: 173px; }
.right { width: 230px; margin-left: 5px; --edge: #f4f4f4; }
.tabs { display: flex; position: relative; }
.tabs.top { height: 22px; }
.tabs.bottom { height: 20px; }
.tab { font-size: 12px; font-weight: 700; color: #d2d2d2; padding-top: 1px; }
.tab.on { color: #fff; background: #25292c; border: 2px solid var(--edge); z-index: 1; }
.top .tab { height: 22px; }
.top .tab.on { height: 24px; border-bottom: 0; border-radius: 6px 6px 0 0; padding-bottom: 3px; }
.bottom .tab.on { height: 22px; margin-top: -2px; border-top: 0; border-radius: 0 0 6px 6px; padding-top: 4px; }
.bottom .tab { height: 20px; }
.insp { width: 78px; }
.vis { width: 72px; }
.eqmark { width: 9px; height: 7px; border: solid #b8b8b8; border-width: 2px 0; align-self: center; margin-left: 8px; }
.trk { width: 71px; }
.edt { width: 74px; }
.rt1 { width: 54px; }
.rt2 { width: 64px; }
.rt3 { width: 50px; }
.rt4 { width: 62px; }
.rb1 { width: 70px; }
.rb2 { width: 78px; }
.body { flex: 1; min-height: 0; background: #25292c; border: 2px solid var(--edge); display: flex; flex-direction: column; padding: 8px 7px 0; }
.left .body { border-radius: 0 6px 6px 0; }
.right .body { border-radius: 6px 6px 6px 0; }

.trackhead { height: 23px; display: flex; border: 1px solid #85878a; border-radius: 3px; background: #737477; overflow: hidden; }
.trackhead button { width: 23px; }
.tname { flex: 1; background: #3cdb39; color: #0d1a0d; font-weight: 600; display: flex; align-items: center; justify-content: space-between; padding: 0 2px 0 5px; }
.pad { margin: 8px 3px 0; height: 49px; padding: 2px; display: flex; gap: 3px; position: relative; background: linear-gradient(#a9bfdd, #a9bfdd) 0 0 / 100% 40px no-repeat, radial-gradient(ellipse at 16px 28px, #a9bfdd 21px, transparent 22px); border-radius: 4px 4px 4px 14px; color: #111; }
.pad button, .ms button, .g button { flex: 1; font-family: "DejaVu Sans", sans-serif; font-weight: 700; font-size: 11px; line-height: 14px; }
.padl { width: 45px; display: flex; flex-direction: column; gap: 2px; }
.padr { flex: 1; display: flex; flex-direction: column; gap: 1px; }
.pgrp { height: 17px; border: 1px solid #5d6c82; border-radius: 3px; background: linear-gradient(#c8d6e8, #a3b5ce); display: flex; overflow: hidden; }
.padl .pgrp button + button { border-left: 1px solid #3c4656; }
.hot { background: #e8b05f; }
.rounds { display: flex; gap: 1px; }
.pad .big { width: 25px; height: 25px; flex: none; border-radius: 50%; border: 1px solid #333d4b; background: linear-gradient(#c9d2de, #8c99aa); }
.pad .sm { width: 18px; height: 18px; flex: none; border-radius: 50%; border: 1px solid #333d4b; background: linear-gradient(#d4dce6, #9aa8ba); }
.vals { display: flex; margin: 2px 3px 0 23px; height: 68px; color: #8398b3; }
.vicons { width: 28px; display: flex; flex-direction: column; gap: 6px; padding-top: 4px; align-items: center; padding-right: 6px; }
.vbox { flex: 1; background: #000; border: 1px solid #30353a; border-radius: 3px; display: flex; flex-direction: column; padding-top: 3px; gap: 1px; }
.vbox label { display: flex; flex-direction: column; height: 20px; text-align: right; color: #eee; font-weight: 600; position: relative; line-height: 15px; }
.vbox .mid { text-align: center; color: #60779a; font-weight: 400; }
.mini { appearance: none; height: 5px; width: 100%; background: linear-gradient(#2a2f38, #2a2f38) 0 2px / 100% 2px no-repeat; }
.mini.filled { background: linear-gradient(90deg, #6f93c4 77%, #2a2f38 77%) 0 2px / 100% 2px no-repeat; }
.mini::-webkit-slider-thumb { appearance: none; width: 5px; height: 6px; background: #c9edff; border: solid #fff; border-width: 0 1px; }
.routes { margin: 8px 3px 0; height: 54px; background: #000; border: 1px solid #33383d; border-radius: 3px; display: flex; flex-direction: column; }
.route { flex: 1; display: flex; align-items: center; gap: 6px; padding: 0 2px 0 3px; font-size: 10px; }
.route + .route { border-top: 1px solid #2d3338; }
.route svg { color: #5f7486; }
.route b { flex: 1; }
.off { color: #7a848c; }
.ext { margin: 8px 3px 0; height: 19px; border: 1px solid #a0a2a4; border-radius: 2px; display: flex; align-items: center; gap: 4px; padding: 0 4px; font-size: 10px; }
.sections { margin-top: 24px; display: flex; flex-direction: column; gap: 10px; }
.sect { height: 23px; display: flex; background: #5b5c60; border: 1px solid #7b7d80; border-radius: 3px; overflow: hidden; }
.slabel { flex: 1; justify-content: flex-start; gap: 2px; padding-left: 3px; }
.slabel, .rsect { font-size: 12px; }
.sico { width: 23px; border-left: 1px solid #7b7d80; }
.sico.on { background: linear-gradient(#9cc4f5, #6fa8ee); }
.setup { margin-top: 9px; width: 25px; height: 19px; background: #1c1e21; border: 1px solid #97999b; border-radius: 2px; }

.mid.zone { flex: 1; min-width: 0; margin-left: 4px; flex-direction: row; background: #25292c; border: 2px solid var(--edge); border-radius: 7px; }
.list { width: 300px; display: flex; flex-direction: column; }
.listbar { height: 28px; padding: 4px 2px 0 4px; display: flex; }
.count { width: 113px; height: 19px; display: flex; background: #44474a; margin-right: 10px; font-size: 10px; }
.count span { flex: 1; padding: 1px 4px; }
.count button { width: 25px; background: #1c1e21; border: 1px solid #5b5c60; }
.find .cell { width: 24px; }
.rows { background: #000; margin-left: 4px; padding: 0 11px 0 1px; border-top: 1px solid #707274; }
.row { height: 42px; display: flex; border-bottom: 1px solid #808284; --tint: #46474b; --btn: #6b6d71; --tag: #929497; background: var(--tint); color: #f2f2f2; }
.row.folder { height: 20px; }
.row.fx { margin-left: 11px; }
.gray { --tint: #47484c; --btn: #696b70; }
.row.sel { --tint: #e8e8e8; --btn: #e4e5e6; --tag: #3cdb39; color: #111; }
.row.teal { --tint: #2f6063; --btn: #547d80; --tag: #41dbdb; }
.row.violet { --tint: #3e3465; --btn: #6a5f8c; --tag: #7550e3; }
.row.pink { --tint: #622f4c; --btn: #855b73; --tag: #ea4194; }
.tag { width: 40px; background: var(--tag); display: flex; justify-content: space-between; align-items: flex-start; padding: 1px 4px 0 1px; color: #fff; }
.folder .tag { padding: 1px 3px; }
.folder.open .tag { width: 51px; }
.tag span { color: #33363a; font-size: 10px; line-height: 19px; opacity: .85; }
.tag .fxm { font-size: 15px; line-height: 18px; text-shadow: 0 1px 1px #555; font-weight: 600; }
.bar .tag { width: 44px; border-right: 3px solid #d3dce4; padding-right: 5px; box-shadow: 1px 0 #111; }
.fold { font-weight: 700; font-size: 11px; padding-left: 10px; line-height: 19px; }
.ctl { flex: 1; padding: 2px 0 0 6px; }
.bar .ctl { padding-left: 2px; }
.line1 { display: flex; gap: 4px; height: 17px; align-items: center; }
.ms { display: flex; width: 45px; height: 17px; border: 1px solid #17181a; border-radius: 3px; background: var(--btn); color: #0a0a0a; overflow: hidden; }
.ms button + button { border-left: 1px solid #17181a; }
.ms .def { background: #e8986a; }
.name { font-size: 13px; font-weight: 600; white-space: pre; }
.line2 { display: flex; gap: 2px; margin: 3px 0 0 48px; color: #0a0a0a; }
.g { height: 17px; display: flex; border: 1px solid #17181a; border-radius: 3px; background: var(--btn); }
.g48 { width: 48px; }
.g50 { width: 51px; padding-right: 4px; }
.g23 { width: 23px; }
.g73 { width: 73px; justify-content: flex-start; padding-left: 3px; font-weight: 700; font-size: 10px; color: #0a0a0a; }
.listfoot { margin-top: auto; height: 22px; display: flex; align-items: center; gap: 9px; padding: 0 5px 0 14px; margin-bottom: 1px; color: #888a8c; }
.listfoot span { color: #ddd; }
.split { width: 3px; background: #58595b; border-left: 1px solid #111; }

.arrange { flex: 1; min-width: 0; position: relative; display: flex; flex-direction: column; padding-top: 4px; overflow: hidden; }
.ruler { height: 25px; padding-left: 9px; background: #1c1e21; margin-right: 3px; }
.rulerin { height: 25px; display: flex; position: relative; overflow: hidden; background: linear-gradient(135deg, #fff 5px, transparent 6px), linear-gradient(225deg, #fff 5px, transparent 6px) 1100px 0 / 10px 10px no-repeat, linear-gradient(#8b8c8f, #8b8c8f) 0 0 / 1110px 100% no-repeat; color: #0c0c0c; }
.rulerin span { width: 57px; flex: none; border-left: 1px solid #0c0c0c; padding: 9px 0 0 4px; font-size: 11px; font-weight: 700; line-height: 16px; }
.rulerin span:first-child { border-color: #8b8c8f; }
.rulerin .out { color: #fff; border-color: #fff; }
.lanes { flex: 1; min-height: 0; position: relative; }
.loop { position: absolute; left: 9px; top: 0; width: 1110px; height: 100%; background: #272e37; }
.gridv { position: absolute; left: 9px; top: 0; right: 0; height: 100%; background: linear-gradient(90deg, #75797c 1px, transparent 1px) 0 0 / 57px 100%; }
.lane { height: 42px; position: relative; border-bottom: 1px solid #40474e; }
.lane.short { height: 20px; }
.auto { position: absolute; left: 0; right: 0; height: 1px; background: #a9b5b8; }
.clip { position: absolute; top: 1px; height: 39px; border: 1px solid var(--b); box-shadow: inset 0 0 0 1px var(--i); background: linear-gradient(90deg, var(--l) 1px, transparent 1px) var(--grid-x) 0 / 57px 100%, var(--c); overflow: hidden; color: #0a0a0a; }
.clip svg { position: absolute; left: -1px; top: -1px; }
.clip b { position: relative; display: inline-block; margin-left: 3px; font-size: 11px; font-weight: 700; line-height: 20px; white-space: nowrap; background: linear-gradient(var(--h), var(--h)) 0 3px / 100% 14px no-repeat; }
.wv { fill: var(--w); stroke: #0b1416; stroke-width: 1; }
.c-gray { --c: #929396; --b: #55575a; --i: #e2e2e2; --l: #6d6e71; --w: #1c1d1f; --h: #929396dd; }
.c-green { --c: #3cdb39; --b: #17810f; --i: #7bf578; --l: #23a51e; --w: #1b8a1b; --h: #3cdb3966; }
.c-cyan { --c: #41dbdb; --b: #158485; --i: #8df5f5; --l: #23aaaa; --w: #178282; --h: #41dbdb66; }
.c-violet { --c: #7550e3; --b: #20105e; --i: #9f83f3; --l: #4a20c4; --w: #38179c; --h: #7550e355; color: #e6defb; }
.c-pink { --c: #ea4194; --b: #6d0d3f; --i: #f57cb8; --l: #c01868; --w: #9c1256; --h: #ea419455; }
.c-mute { --c: #d8dde4; --b: #8d9198; --i: #f2f4f7; --l: #b4bfcb; --h: #d8dde488; color: #8b8d90; }
.ghost { fill: none; stroke: #5a3fb5; }
.p .ghost { stroke: #b22a72; }
.soft { opacity: .3; }
.fade { position: absolute; left: 2px; top: 1px; bottom: 1px; background: repeating-linear-gradient(45deg, transparent 0 5px, #0004 5px 6px); }
.cutline { position: absolute; top: 0; bottom: 0; width: 1px; background: #17810f; }
.cursor { position: absolute; left: 827px; top: 4px; bottom: 16px; width: 4px; border: solid #fff; border-width: 0 1px; background: #55585a; }
.hscroll { height: 12px; margin-bottom: 4px; display: flex; align-items: center; gap: 6px; padding-left: 2px; padding-right: 12px; color: #b5b7b9; }
.htrack { flex: 1; display: flex; align-items: center; height: 12px; background: #45484b; padding: 0 4px 0 2px; color: #eee; }
.hthumb { width: 317px; height: 8px; border-radius: 2px; background: #f0f0f0; margin-left: 5px; }
.sg { font-size: 12px; line-height: 12px; color: #b5b7b9; }
.zr, .zv { appearance: none; }
.zr { width: 50px; height: 9px; background: linear-gradient(#8c8e90, #8c8e90) 0 4px / 100% 1px no-repeat; }
.zr::-webkit-slider-thumb, .zv::-webkit-slider-thumb { appearance: none; width: 6px; height: 6px; border-radius: 50%; background: #b9bbbd; }
.zv { writing-mode: vertical-lr; direction: rtl; width: 6px; background: linear-gradient(#8c8e90, #8c8e90) 3px 0 / 1px 100% no-repeat; }
.h50 { height: 50px; margin: 6px 0 4px; }
.h60 { height: 56px; }
.vcol { width: 15px; padding: 4px 3px 13px 0; display: flex; flex-direction: column; align-items: center; gap: 2px; color: #b5b7b9; }
.vbtn { width: 10px; height: 22px; border: 1px solid #86888a; border-radius: 3px; background: #5b5c60; margin-bottom: 4px; color: #fff; }
.vtrack { flex: 1; width: 12px; background: #45484b; border-radius: 3px; display: flex; flex-direction: column; align-items: center; color: #77797b; padding: 2px 0; }

.chan { height: 23px; flex: none; background: #6b6c6e; border: 1px solid #8b8d8f; border-radius: 3px; display: flex; align-items: center; gap: 5px; padding: 0 4px; font-size: 12px; }
.main { background: #5b5c60; }
.pow { width: 22px; height: 15px; border-radius: 2px; border: 1px solid #111; background: linear-gradient(#4f92dd, #2c67ad); color: #0c1420; }
.cue { display: flex; margin-top: 7px; height: 102px; }
.cuel { width: 128px; }
.pair { display: flex; gap: 1px; }
.hb { height: 30px; flex: 1; border-radius: 3px; border: 2px solid #1a1c1e; outline: 1px solid #5a5c5f; outline-offset: -1px; color: #101112; font-weight: 700; font-size: 11px; }
.hb.gray { background: linear-gradient(#a5a8a9 0 45%, #818586 55%, #8f9394); }
.hb.blue { background: linear-gradient(#7fb2e8, #3f7dc4 45%, #2c66aa 55%, #2f6fb8); }
.hb.amber { background: linear-gradient(#dcac7c, #c47d36 45%, #9c5b1e 55%, #b36c28); }
.hb.w40 { width: 40px; flex: none; }
.crow { display: flex; align-items: center; margin: 6px 0 0 7px; gap: 18px; }
.crow.two { margin-top: 6px; }
.rnd { width: 27px; height: 27px; flex: none; border-radius: 50%; border: 3px double #55585b; background: linear-gradient(#a5a8a9, #7d8182); color: #101112; font-weight: 700; font-size: 10px; }
.rnd.green { background: linear-gradient(#67dc9b, #2aa862); }
.rnd.bluer { background: linear-gradient(#6ea6e6, #2862a8); }
.lvl { width: 71px; height: 15px; border: 1px solid #5d6064; border-radius: 3px; background: #2a2e35; display: flex; align-items: center; justify-content: space-between; padding: 2px; font-size: 9px; color: #b4bac2; }
.lvl i { width: 50px; height: 9px; border-radius: 2px; background: #424956; }
.lvl.on { background: #050505; color: #e6e6e6; }
.lvl.on i { background: linear-gradient(#2c5d97, #16416f); border: 1px solid #3f6ea6; }
.lvl.panl { background: linear-gradient(#4a515c, #4a515c) 35px 0 / 1px 100% no-repeat #2a2e35; justify-content: flex-end; }
.stack { display: flex; flex-direction: column; gap: 1px; }
.fad { width: 39px; position: relative; }
.ft { stroke: #55585b; }
.ft.strong { stroke: #9a9ea2; }
.vf { position: absolute; left: 0; top: 4px; width: 12px; height: 94px; appearance: none; writing-mode: vertical-lr; direction: rtl; background: none; }
.vf::-webkit-slider-thumb { appearance: none; width: 12px; height: 24px; border-radius: 1px; border: 1px solid #5c1014; background: linear-gradient(#e63a40 0 10px, #3a0a0c 10px 11px, #ee5a5e 11px); }
.meter { width: 36px; height: 100px; border: 1px solid #4b4e51; border-radius: 3px; background: #000; display: flex; flex-direction: column; padding-top: 2px; gap: 8px; font-size: 8px; font-weight: 600; color: #4c4f52; }
.meter span { display: flex; align-items: center; justify-content: space-between; gap: 4px; height: 15px; padding: 0 2px; }
.meter span::before, .meter span::after { content: ""; width: 7px; height: 1px; background: #3a3d40; }
.rsect { height: 23px; flex: none; background: #5b5c60; border: 1px solid #7b7d80; border-radius: 3px; justify-content: flex-start; gap: 3px; padding-left: 4px; margin: 8px 0 4px; }
.p1 { margin-top: 10px; width: 208px; }
.mainrow { display: flex; margin-top: 6px; height: 98px; }
.mcol { width: 64px; padding-left: 5px; display: flex; flex-direction: column; gap: 6px; }
.knob { width: 84px; height: 84px; position: relative; margin-top: 5px; }
.knob b { position: absolute; inset: 0; display: flex; align-items: center; justify-content: center; color: #e8dada; font-weight: 400; font-size: 12px; padding-top: 2px; }
.meter.m2 { height: 93px; margin-left: 23px; gap: 6px; }
.p2 { width: 208px; }
.hb.ba { flex: 0 0 68px; }
.hb.b1 { flex: 0 0 46px; }
.hb.talk { flex: none; margin: 4px 0 13px; width: 211px; }

.transport { height: 41px; background: #25292c; display: flex; padding: 7px 4px 0; flex: none; }
.transport > .grp:first-child { margin-right: 5px; }
.opt { width: 44px; }
.aq { width: 38px; justify-content: center; font-size: 14px; }
.grp.aq .cell { width: 36px; }
.lead { flex: 9; }
.trail { flex: 8; }
.center { display: flex; height: 25px; }
.center .grp { margin-right: 5px; }
.center .gap { margin-left: 5px; }
.pos { width: 150px; }
.pos input { flex: 1; width: 50px; text-align: right; font-size: 14px; padding-right: 6px; white-space: pre; }
.tempo input { flex: 1; width: 50px; text-align: right; font-size: 12px; padding-right: 6px; }
.tempo { width: 107px; align-items: center; padding-right: 4px; }
.center .dots { margin: 0 6px 0 -3px; }
.keys { width: 200px; height: 32px; margin: -3px 5px 0 0; border: 2px solid #c9cbcd; border-radius: 4px; background: #737476; display: flex; overflow: hidden; }
.keys button { flex: 1; }
.keys .on { background: #e2e9f3; color: #111; }
.faint { color: #8b8d90; }
.grp.faint .cell { width: 37px; }
.grp .cell.line { border-right: 1px solid #7b7d80; }
.clicks { width: 225px; }
.beats { flex: 1; display: flex; gap: 17px; padding: 5px 18px 0 4px; }
.beats i { width: 19px; height: 3px; background: #f0f0f0; margin-top: 13px; }
.beats .hi { margin-top: 0; }
.level { width: 103px; align-items: center; padding-right: 4px; }
.level i { width: 1px; height: 100%; margin-left: 25px; background: #44474a; }

.ink { position: absolute; right: 160px; bottom: 134px; pointer-events: none; }
.stamp { position: absolute; left: 20px; bottom: 14px; pointer-events: none; opacity: .45; }
.nf { font-size: 26px; font-weight: 300; fill: #909090; }
.thick { font-weight: 400; }
.he { font-size: 19px; font-weight: 800; fill: #1b1c1e; }
</style>
